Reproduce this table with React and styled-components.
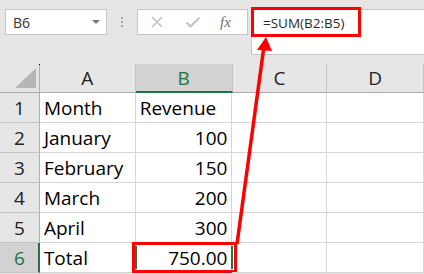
import React from 'react';
import styled, { createGlobalStyle } from 'styled-components';

const GREEN = '#217346';
const RED = '#ff0000';

const columns = [
    { key: 'A', width: 96 },
    { key: 'B', width: 97, selected: true },
    { key: 'C', width: 95 },
    { key: 'D', width: 97 },
];

const rows = [
    ['Month', 'Revenue'],
    ['January', '100'],
    ['February', '150'],
    ['March', '200'],
    ['April', '300'],
    ['Total', '750.00'],
];

class App extends React.Component {
    render() {
        return <Page>
            <Global />
            <TopBar>
                <NameBox>
                    <span>B6</span>
                    <Caret />
                </NameBox>
                <Grip><i /><i /><i /></Grip>
                <Buttons>
                    <Btn>
                        <svg width="14" height="14" viewBox="0 0 14 14">
                            <path d="M2 2 L12 12 M12 2 L2 12" stroke="#c4c4c4" strokeWidth="1.6" fill="none" />
                        </svg>
                    </Btn>
                    <Btn>
                        <svg width="16" height="14" viewBox="0 0 16 14">
                            <path d="M1.5 7.5 L5.5 11.5 L14.5 2.5" stroke="#c4c4c4" strokeWidth="2.2" fill="none" />
                        </svg>
                    </Btn>
                    <Fx>fx</Fx>
                </Buttons>
                <FormulaBox>
                    <FormulaText>=SUM(B2:B5)</FormulaText>
                    <FormulaMark />
                </FormulaBox>
            </TopBar>
            <Sheet>
                <HeadRow>
                    <Corner>
                        <svg width="39" height="28" viewBox="0 0 39 28">
                            <polygon points="15,24 36,4 36,24" fill="#b6b6b6" />
                        </svg>
                    </Corner>
                    {columns.map(c => <ColHead key={c.key} w={c.width} selected={c.selected}>{c.key}</ColHead>)}
                </HeadRow>
                {rows.map((r, i) => {
                    const active = i === rows.length - 1;
                    return <Row key={i}>
                        <RowHead selected={active}>{i + 1}</RowHead>
                        <Cell w={96}>{r[0]}</Cell>
                        <Cell w={97} right={i > 0}>
                            {r[1]}
                            {active && <CellMark />}
                        </Cell>
                        <Cell w={95} />
                        <Cell w={97} />
                    </Row>;
                })}
            </Sheet>
            <Arrow width="424" height="274" viewBox="0 0 424 274">
                <line x1="237" y1="244" x2="264" y2="46" stroke={RED} strokeWidth="3.5" />
                <polygon points="266,37 257,50 272,51" fill={RED} />
            </Arrow>
        </Page>
    }
}

const Global = createGlobalStyle`
body { margin: 0; background: #fff; }
* { box-sizing: border-box; }
`;

const Page = styled.div`
position: relative;
width: 424px;
height: 274px;
overflow: hidden;
font-family: "Open Sans", "Liberation Sans", sans-serif;
background: #e6e6e6;
`;

const TopBar = styled.div`
display: flex;
align-items: flex-start;
height: 65px;
padding: 9px 0 0 5px;
background: #e6e6e6;
border-top: 1px solid #dadada;
margin-top: -1px;
`;

const NameBox = styled.div`
width: 102px;
height: 26px;
background: #fff;
border: 1px solid #c6c6c6;
display: flex;
align-items: center;
justify-content: space-between;
padding: 0 6px 0 7px;
font-size: 14px;
color: #333;
`;

const Caret = styled.div`
width: 0;
height: 0;
border-left: 4px solid transparent;
border-right: 4px solid transparent;
border-top: 4px solid #777;
`;

const Grip = styled.div`
width: 30px;
height: 26px;
display: flex;
flex-direction: column;
align-items: center;
justify-content: center;
gap: 2px;
i {
    width: 2px;
    height: 2px;
    background: #a8a8a8;
}
`;

const Buttons = styled.div`
width: 111px;
height: 26px;
background: #fff;
border: 1px solid #c6c6c6;
display: flex;
align-items: center;
padding-left: 12px;
`;

const Btn = styled.div`
width: 35px;
display: flex;
align-items: center;
`;

const Fx = styled.div`
font-family: "Liberation Serif", serif;
font-style: italic;
font-size: 15px;
color: #6f6f6f;
`;

const FormulaBox = styled.div`
position: relative;
margin-left: 3px;
flex: 1;
height: 46px;
background: #fff;
border: 1px solid #c6c6c6;
border-right: none;
padding: 4px 0 0 11px;
`;

const FormulaText = styled.div`
font-size: 13.5px;
color: #262b33;
line-height: 18px;
`;

const FormulaMark = styled.div`
position: absolute;
left: -1px;
top: -3px;
width: 110px;
height: 30px;
border: 3px solid ${RED};
`;

const Sheet = styled.div`
display: flex;
flex-direction: column;
background: #fff;
`;

const HeadRow = styled.div`
display: flex;
height: 29px;
background: #e6e6e6;
`;

const Corner = styled.div`
width: 40px;
border-right: 1px solid #b0b0b0;
border-bottom: 1px solid #ababab;
position: relative;
&::before {
    content: '';
    position: absolute;
    right: -1px;
    top: 0;
    width: 1px;
    height: 1px;
    background: #000;
}
`;

const ColHead = styled.div`
width: ${p => p.w}px;
display: flex;
align-items: center;
justify-content: center;
font-size: 19px;
color: ${p => p.selected ? GREEN : '#222'};
background: ${p => p.selected ? '#d2d2d2' : '#e6e6e6'};
border-right: 1px solid #c4c4c4;
border-bottom: ${p => p.selected ? `2px solid ${GREEN}` : '1px solid #ababab'};
padding-top: ${p => p.selected ? 1 : 0}px;
`;

const Row = styled.div`
display: flex;
height: 30px;
`;

const RowHead = styled.div`
width: 40px;
display: flex;
align-items: center;
justify-content: center;
font-size: 19px;
color: ${p => p.selected ? GREEN : '#222'};
background: ${p => p.selected ? '#d2d2d2' : '#e6e6e6'};
border-bottom: 1px solid #c4c4c4;
border-right: ${p => p.selected ? `2px solid ${GREEN}` : '1px solid #b0b0b0'};
padding-left: ${p => p.selected ? 1 : 0}px;
`;

const Cell = styled.div`
position: relative;
width: ${p => p.w}px;
display: flex;
align-items: center;
justify-content: ${p => p.right ? 'flex-end' : 'flex-start'};
padding: 0 4px;
font-size: 19px;
color: #000;
white-space: nowrap;
border-right: 1px solid #d4d4d4;
border-bottom: 1px solid #d4d4d4;
`;

const CellMark = styled.div`
position: absolute;
left: -4px;
right: -6px;
top: -1px;
bottom: -1px;
border: 3px solid ${RED};
&::before {
    content: '';
    position: absolute;
    top: 1px;
    bottom: 1px;
    left: 0;
    right: 1px;
    border-left: 2px solid ${GREEN};
    border-right: 2px solid ${GREEN};
}
`;

const Arrow = styled.svg`
position: absolute;
left: 0;
top: 0;
pointer-events: none;
`;

export default App;
